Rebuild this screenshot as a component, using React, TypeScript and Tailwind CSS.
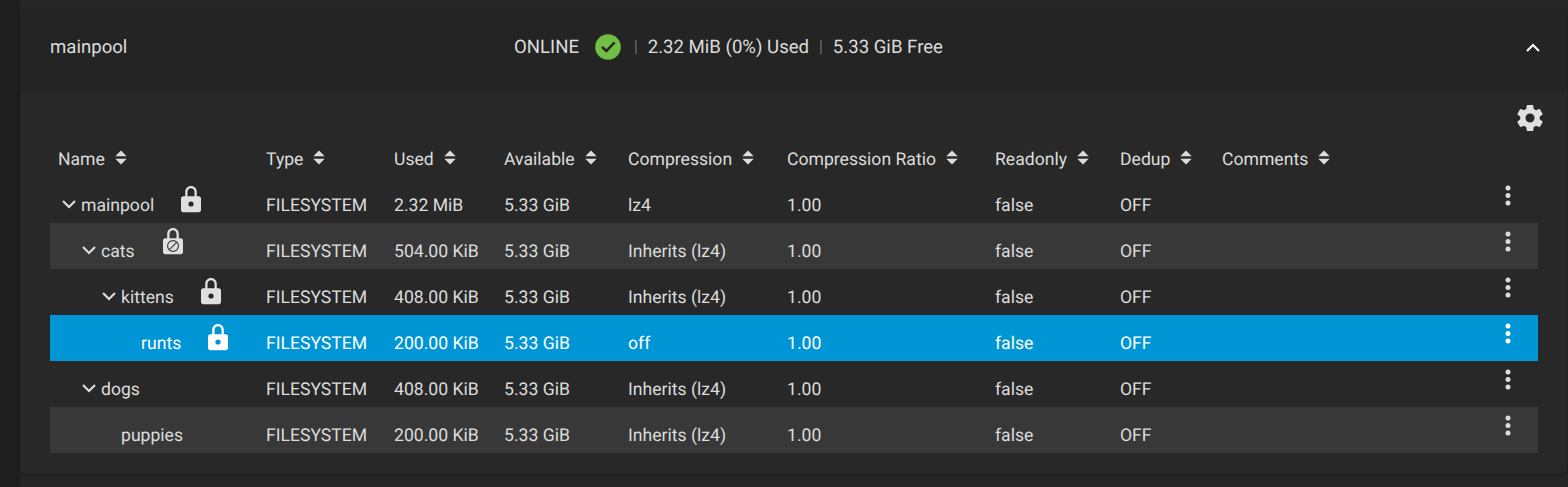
import React from "react";

const LOCK = "M10 0C6.7 0 4.2 2.6 4.2 5.9V10.2H2.2C1 10.2 0 11.2 0 12.4V24C0 25.2 1 26.2 2.2 26.2H17.8C19 26.2 20 25.2 20 24V12.4C20 11.2 19 10.2 17.8 10.2H15.8V5.9C15.8 2.6 13.3 0 10 0ZM10 2.3C12 2.3 13.5 3.9 13.5 5.9V10.2H6.5V5.9C6.5 3.9 8 2.3 10 2.3Z";

function Lock({ blocked, color }: { blocked?: boolean; color: string }) {
  return (
    <svg width="20" height="27" viewBox="0 0 20 27" className="shrink-0">
      <path d={LOCK} fill={color} fillRule="evenodd" />
      {blocked ? (
        <g fill="none" stroke="#383838" strokeWidth="1.1">
          <circle cx="10" cy="18" r="5.4" />
          <path d="M6.2 21.8L13.8 14.2" />
        </g>
      ) : (
        <circle cx="10" cy="18" r="2.6" fill={color === "#ffffff" ? "#0095d5" : "#282828"} />
      )}
    </svg>
  );
}

function Sort() {
  return (
    <svg width="12" height="15" viewBox="0 0 12 15" className="ml-[10px] shrink-0 -translate-y-[2px]" fill="currentColor">
      <path d="M6 0.5L11.7 6.3H0.3Z" />
      <path d="M6 14.5L0.3 8.7H11.7Z" />
    </svg>
  );
}

function Dots({ color }: { color: string }) {
  return (
    <svg width="6" height="22" viewBox="0 0 6 22" fill={color}>
      <circle cx="3" cy="3" r="2.5" />
      <circle cx="3" cy="10.5" r="2.5" />
      <circle cx="3" cy="18" r="2.5" />
    </svg>
  );
}

function ChevronDown() {
  return (
    <svg width="14" height="9" viewBox="0 0 14 9" fill="none" stroke="currentColor" strokeWidth="2.2">
      <path d="M1 1L7 7L13 1" />
    </svg>
  );
}

const cols = "grid grid-cols-[208px_128px_110px_124px_159px_208px_125px_102px_1fr]";

const headers = ["Name", "Type", "Used", "Available", "Compression", "Compression Ratio", "Readonly", "Dedup", "Comments"];

type Row = {
  name: string;
  depth: number;
  chevron: boolean;
  lock?: "on" | "blocked";
  used: string;
  compression: string;
  bg: string;
};

const rows: Row[] = [
  { name: "mainpool", depth: 0, chevron: true, lock: "on", used: "2.32 MiB", compression: "lz4", bg: "" },
  { name: "cats", depth: 1, chevron: true, lock: "blocked", used: "504.00 KiB", compression: "Inherits (lz4)", bg: "bg-[#383838]" },
  { name: "kittens", depth: 2, chevron: true, lock: "on", used: "408.00 KiB", compression: "Inherits (lz4)", bg: "" },
  { name: "runts", depth: 3, chevron: false, lock: "on", used: "200.00 KiB", compression: "off", bg: "bg-[#0095d5] text-white" },
  { name: "dogs", depth: 1, chevron: true, used: "408.00 KiB", compression: "Inherits (lz4)", bg: "" },
  { name: "puppies", depth: 2, chevron: false, used: "200.00 KiB", compression: "Inherits (lz4)", bg: "bg-[#383838]" },
];

function Cell({ children }: { children: React.ReactNode }) {
  return <div className="whitespace-nowrap pl-2 pt-3">{children}</div>;
}

export default function App() {
  return (
    <div
      className="flex h-[487px] w-[1568px] overflow-hidden bg-[#1e1e1e] text-[17.6px] leading-[20px] text-[#dcdcdc] [text-rendering:geometricPrecision]"
      style={{ fontFamily: "Roboto, sans-serif" }}
    >
      <div className="w-5 shrink-0" />
      <div className="flex-1 bg-[#262626] pt-[10px]">
        <div className="mr-[1px] overflow-hidden rounded-b-[4px] bg-[#282828] shadow-[0_2px_4px_rgba(0,0,0,0.25)]">
          <div className="flex h-[82px] items-center bg-[#242424] pb-[8px] pl-[30px] pr-[27px] text-[18.6px]">
            <div className="w-[464px]">mainpool</div>
            <div className="flex items-center">
              <span>ONLINE</span>
              <svg width="26" height="26" viewBox="0 0 26 26" className="ml-4">
                <circle cx="13" cy="13" r="12.8" fill="#71bf44" />
                <path d="M7 12.8L11.3 17L19.6 8.4" fill="none" stroke="#242424" strokeWidth="2.5" />
              </svg>
              <span className="ml-[13px] text-[17px] font-light text-[#8a8a8a]">|</span>
              <span className="ml-[10px]">2.32 MiB (0%) Used</span>
              <span className="ml-[10px] text-[17px] font-light text-[#8a8a8a]">|</span>
              <span className="ml-[10px]">5.33 GiB Free</span>
            </div>
            <svg width="14" height="9" viewBox="0 0 14 9" fill="none" stroke="#ffffff" strokeWidth="2" className="ml-auto">
              <path d="M1 8L7 2L13 8" />
            </svg>
          </div>
          <div className="pb-5 pl-[30px] pr-[29px]">
            <div className="flex justify-end pt-[13px]">
              <svg width="26" height="26" viewBox="2 2 20 20" className="-mr-[5px]" fill="#e0e0e0">
                <path d="M12 15.5A3.5 3.5 0 0 1 8.5 12 3.5 3.5 0 0 1 12 8.5 3.5 3.5 0 0 1 15.5 12 3.5 3.5 0 0 1 12 15.5M19.43 12.97C19.47 12.65 19.5 12.33 19.5 12S19.47 11.34 19.43 11L21.54 9.37C21.73 9.22 21.78 8.95 21.66 8.73L19.66 5.27C19.54 5.05 19.27 4.96 19.05 5.05L16.56 6.05C16.04 5.66 15.5 5.32 14.87 5.07L14.5 2.42C14.46 2.18 14.25 2 14 2H10C9.75 2 9.54 2.18 9.5 2.42L9.13 5.07C8.5 5.32 7.96 5.66 7.44 6.05L4.95 5.05C4.73 4.96 4.46 5.05 4.34 5.27L2.34 8.73C2.21 8.95 2.27 9.22 2.46 9.37L4.57 11C4.53 11.34 4.5 11.67 4.5 12S4.53 12.65 4.57 12.97L2.46 14.63C2.27 14.78 2.21 15.05 2.34 15.27L4.34 18.73C4.46 18.95 4.73 19.03 4.95 18.95L7.44 17.94C7.96 18.34 8.5 18.68 9.13 18.93L9.5 21.58C9.54 21.82 9.75 22 10 22H14C14.25 22 14.46 21.82 14.5 21.58L14.87 18.93C15.5 18.67 16.04 18.34 16.56 17.94L19.05 18.95C19.27 19.03 19.54 18.95 19.66 18.73L21.66 15.27C21.78 15.05 21.73 14.78 21.54 14.63L19.43 12.97Z" />
              </svg>
            </div>
            <div className={`${cols} h-[46px] items-center pt-[11px]`}>
              {headers.map((h) => (
                <div key={h} className="flex items-center whitespace-nowrap pl-2">
                  <span>{h}</span>
                  <Sort />
                </div>
              ))}
            </div>
            {rows.map((r) => {
              const selected = r.name === "runts";
              const blocked = r.lock === "blocked";
              return (
                <div key={r.name} className={`${cols} h-[46px] items-center ${r.bg}`}>
                  <div className="flex items-center whitespace-nowrap pl-2" style={{ marginLeft: r.depth * 20 }}>
                    <div className="flex w-[23px] shrink-0 items-center pl-1 pt-[8px]">{r.chevron && <ChevronDown />}</div>
                    <span className="pt-3">{r.name}</span>
                    {r.lock && (
                      <div className={blocked ? "ml-[28px] -translate-y-[5px]" : "ml-[27px] -translate-y-[1px]"}>
                        <Lock blocked={blocked} color={selected ? "#ffffff" : "#e0e0e0"} />
                      </div>
                    )}
                  </div>
                  <Cell>FILESYSTEM</Cell>
                  <Cell>{r.used}</Cell>
                  <Cell>5.33 GiB</Cell>
                  <Cell>{r.compression}</Cell>
                  <Cell>1.00</Cell>
                  <Cell>false</Cell>
                  <Cell>OFF</Cell>
                  <div className="flex justify-end pb-[8px] pr-[27px]">
                    <Dots color={selected ? "#ffffff" : "#dcdcdc"} />
                  </div>
                </div>
              );
            })}
          </div>
        </div>
      </div>
    </div>
  );
}
